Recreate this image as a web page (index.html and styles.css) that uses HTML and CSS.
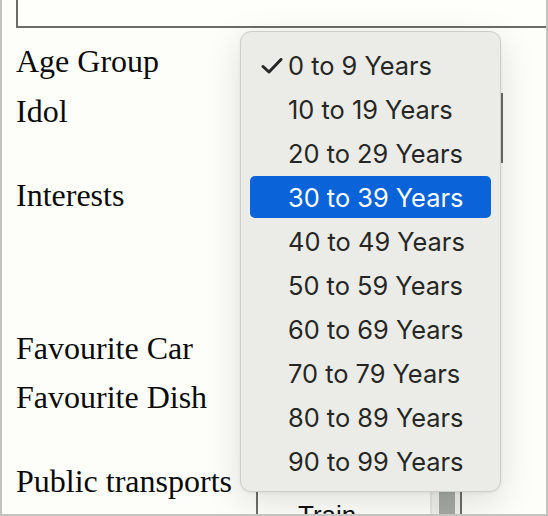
FILE: index.html
```html
<!DOCTYPE html>
<html lang="en">
<head>
<meta charset="utf-8">
<title>Profile form</title>
<link rel="stylesheet" href="styles.css">
</head>
<body>
<div class="frame">
  <div class="notes"></div>
  <form class="form">
    <div class="row row-age">
      <span class="label">Age Group</span>
      <div class="control"></div>
    </div>
    <div class="row row-idol">
      <span class="label">Idol</span>
      <div class="control"><div class="idol-box"></div></div>
    </div>
    <div class="row row-interests">
      <span class="label">Interests</span>
      <div class="control"></div>
    </div>
    <div class="row row-car">
      <span class="label">Favourite Car</span>
      <div class="control"></div>
    </div>
    <div class="row row-dish">
      <span class="label">Favourite Dish</span>
      <div class="control"></div>
    </div>
    <div class="row row-public">
      <span class="label">Public transports</span>
      <div class="control">
        <div class="listbox">
          <div class="listbox-options">
            <div class="listbox-option">Train</div>
          </div>
          <div class="listbox-scroll"><div class="listbox-thumb"></div></div>
        </div>
      </div>
    </div>
  </form>

  <ul class="menu">
    <li class="menu-item checked">
      <svg class="check" width="22" height="16" viewBox="0 0 22 16"><path d="M2 8.5 L8 14 L20 1.5" fill="none" stroke="#262724" stroke-width="3" stroke-linecap="round" stroke-linejoin="round"/></svg>
      0 to 9 Years
    </li>
    <li class="menu-item">10 to 19 Years</li>
    <li class="menu-item">20 to 29 Years</li>
    <li class="menu-item active">30 to 39 Years</li>
    <li class="menu-item">40 to 49 Years</li>
    <li class="menu-item">50 to 59 Years</li>
    <li class="menu-item">60 to 69 Years</li>
    <li class="menu-item">70 to 79 Years</li>
    <li class="menu-item">80 to 89 Years</li>
    <li class="menu-item">90 to 99 Years</li>
  </ul>
</div>
</body>
</html>
```

FILE: styles.css
```css
html, body {
  margin: 0;
  padding: 0;
  background: #fdfef9;
}

.frame {
  position: relative;
  width: 548px;
  height: 516px;
  box-sizing: border-box;
  border: 2px solid #c3c4bf;
  border-top: none;
  background: #fdfef9;
  overflow: hidden;
}

.notes {
  margin-left: 14px;
  height: 26px;
  border-left: 2px solid #6b6d68;
  border-bottom: 2px solid #6b6d68;
  background: #fefffb;
}

.form {
  padding: 15px 0 0 14px;
  font-family: "Liberation Serif", "Times New Roman", serif;
  font-size: 32px;
  line-height: 36px;
  color: #0b0b0a;
}

.row {
  display: grid;
  grid-template-columns: 240px 1fr;
  align-items: start;
}

.label {
  white-space: nowrap;
}

.row-age { height: 50px; }
.row-idol { height: 84px; }
.row-interests { height: 153px; }
.row-car { height: 49px; }
.row-dish { height: 84px; }
.row-public { height: 51px; }

.idol-box {
  width: 247px;
  height: 70px;
  box-sizing: border-box;
  border: 2px solid #6b6d68;
  background: #fefffb;
}

.listbox {
  display: flex;
  width: 206px;
  height: 51px;
  box-sizing: border-box;
  border: 2px solid #6b6d68;
  border-bottom: none;
  background: #fefffb;
  overflow: hidden;
}

.listbox-options {
  flex: 1;
  padding: 35px 0 0 40px;
  font-family: "Liberation Sans", Arial, sans-serif;
  font-size: 26px;
  line-height: 30px;
  color: #111;
}

.listbox-scroll {
  width: 28px;
  border-left: 2px solid #e4e5e0;
  background: #f0f1ec;
  display: flex;
  justify-content: center;
}

.listbox-thumb {
  width: 16px;
  margin-left: 2px;
  background: #a7a9a4;
}

.menu {
  position: absolute;
  left: 238px;
  top: 31px;
  width: 261px;
  height: 461px;
  box-sizing: border-box;
  margin: 0;
  padding: 12px 9px 0;
  list-style: none;
  display: flex;
  flex-direction: column;
  gap: 2px;
  border: 1px solid #cdcec9;
  border-radius: 11px;
  background: #ebece7;
  box-shadow: 0 10px 36px rgba(0, 0, 0, 0.13), 0 1px 3px rgba(0, 0, 0, 0.06);
  font-family: Inter, "Liberation Sans", sans-serif;
  font-size: 25.4px;
  color: #262724;
}

.menu-item {
  position: relative;
  display: flex;
  align-items: center;
  flex: none;
  height: 42px;
  padding-left: 38px;
  border-radius: 5px;
  white-space: nowrap;
}

.menu-item.active {
  background: #0a63d8;
  color: #ffffff;
}

.check {
  position: absolute;
  left: 11px;
  top: 14px;
}
```
